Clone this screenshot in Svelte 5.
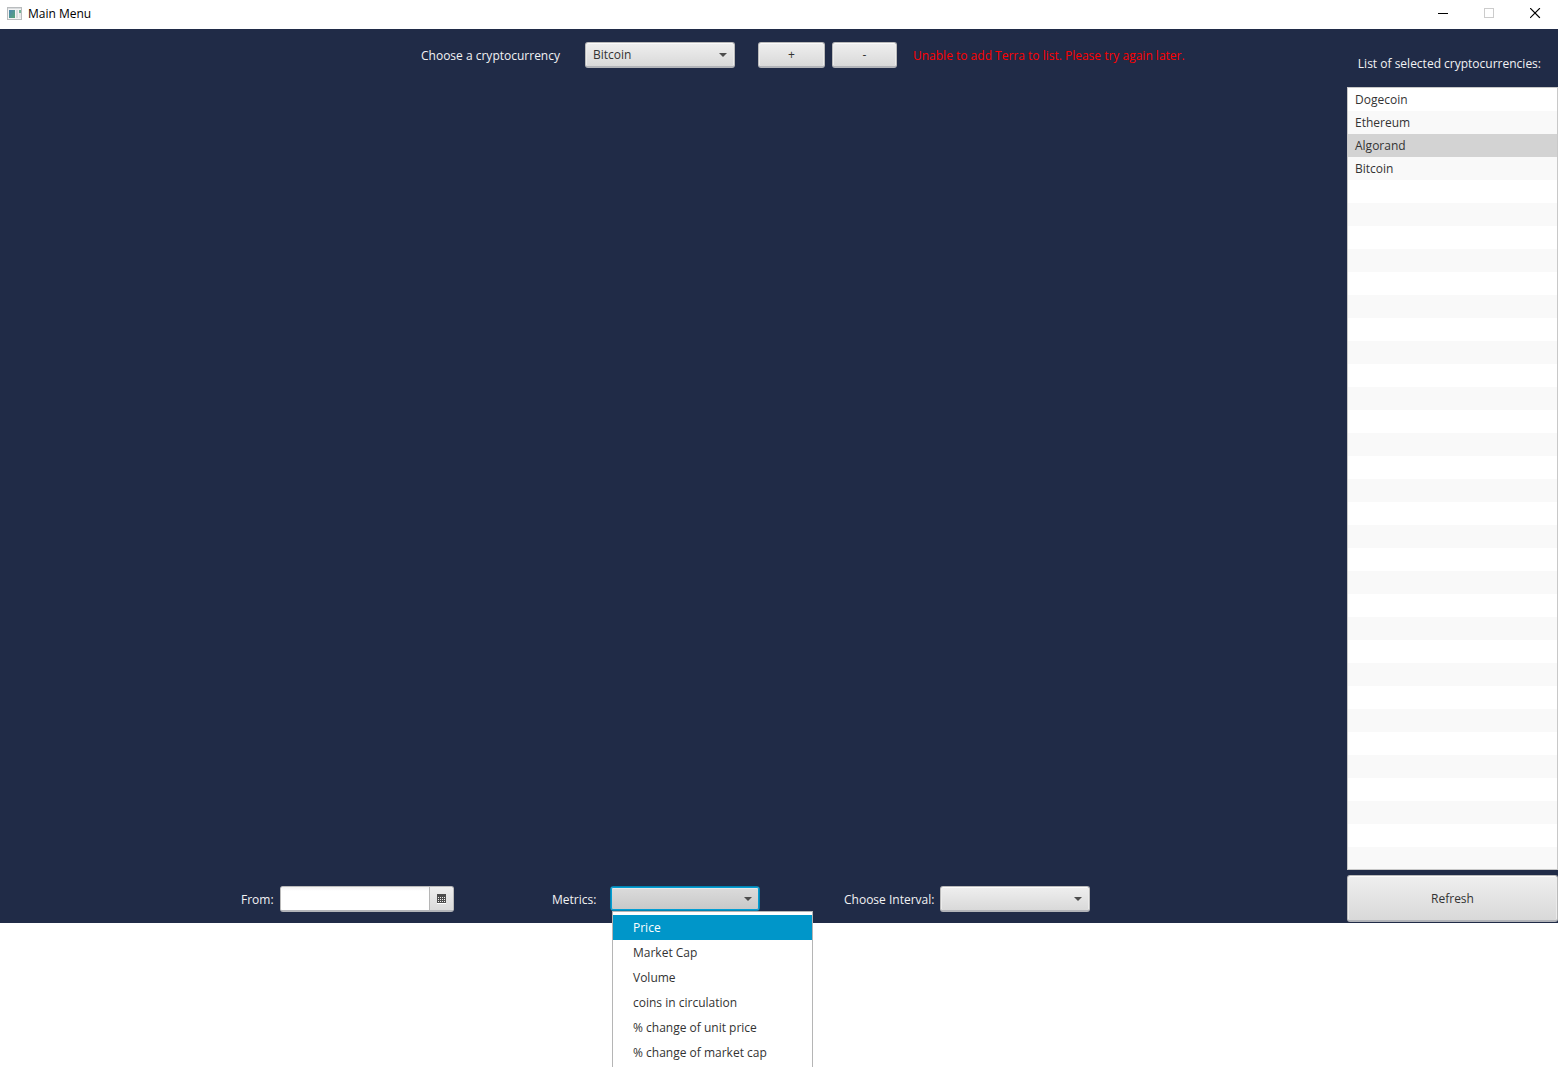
<script>
  const coins = ['Bitcoin', 'Dogecoin', 'Ethereum', 'Algorand', 'Terra'];
  const picked = ['Dogecoin', 'Ethereum', 'Algorand', 'Bitcoin'];
  const rows = Array.from({ length: 34 }, (_, i) => picked[i] ?? '');
  const metrics = [
    'Price',
    'Market Cap',
    'Volume',
    'coins in circulation',
    '% change of unit price',
    '% change of market cap'
  ];
  const intervals = ['Daily', 'Weekly', 'Monthly'];

  let coin = $state('Bitcoin');
  let selected = $state('Algorand');
  let highlighted = $state('Price');
  let metric = $state('');
  let interval = $state('');
  let from = $state('');
</script>

<div class="app">
  <header class="titlebar">
    <svg class="logo" width="16" height="14" viewBox="0 0 16 14" aria-hidden="true">
      <defs>
        <linearGradient id="pane" x1="0" y1="0" x2="1" y2="1">
          <stop offset="0" stop-color="#4a86b0" />
          <stop offset="1" stop-color="#57a578" />
        </linearGradient>
      </defs>
      <rect x="0.5" y="0.5" width="14" height="12" fill="#f4f4f4" stroke="#b9bcbe" />
      <rect x="1" y="1" width="13" height="1" fill="#d9dcde" />
      <rect x="2" y="3" width="6" height="8" fill="url(#pane)" />
      <rect x="9" y="3" width="2" height="8" fill="#d8dcdf" />
      <rect x="12" y="3" width="2" height="3" fill="#74b59a" />
      <rect x="12" y="6" width="2" height="5" fill="#e6e8e9" />
    </svg>
    <h1>Main Menu</h1>
    <div class="window-buttons">
      <button aria-label="Minimize">
        <svg width="12" height="11" viewBox="0 0 12 11"><path d="M1 5.5H11" stroke="#000" /></svg>
      </button>
      <button aria-label="Maximize" disabled>
        <svg width="11" height="11" viewBox="0 0 11 11"><rect x="0.5" y="0.5" width="9" height="9" fill="none" stroke="#ccc" /></svg>
      </button>
      <button aria-label="Close">
        <svg width="11" height="11" viewBox="0 0 11 11"><path d="M0.5 0.5L9.5 9.5M9.5 0.5L0.5 9.5" stroke="#000" stroke-width="1.1" stroke-linecap="square" /></svg>
      </button>
    </div>
  </header>

  <main>
    <section class="workspace">
      <div class="toolbar">
        <label class="coin-label" for="coin">Choose a cryptocurrency</label>
        <div class="combo">
          <select id="coin" bind:value={coin}>
            {#each coins as name}<option>{name}</option>{/each}
          </select>
        </div>
        <div class="actions">
          <button class="btn add">+</button>
          <button class="btn remove">-</button>
        </div>
        <p class="error" role="alert">Unable to add Terra to list. Please try again later.</p>
      </div>

      <div class="filters">
        <label class="from-label" for="from">From:</label>
        <div class="date">
          <input id="from" type="text" bind:value={from} />
          <button aria-label="Open calendar">
            <svg width="9" height="10" viewBox="0 0 9 10">
              <path d="M0 0H9V9H0Z" fill="#4d4d4d" />
              <path d="M1 3.5H8M1 5.5H8M1 7.5H8" stroke="#eee" stroke-dasharray="1 1" />
              <path d="M0 9.5H9" stroke="#fff" />
            </svg>
          </button>
        </div>
        <label class="metric-label" for="metric">Metrics:</label>
        <div class="combo open">
          <select id="metric" bind:value={metric}>
            <option value=""></option>
            {#each metrics as name}<option>{name}</option>{/each}
          </select>
          <ul class="menu">
            {#each metrics as name}
              <li>
                <button
                  class:highlighted={name === highlighted}
                  onmouseenter={() => (highlighted = name)}
                  onclick={() => (metric = name)}>{name}</button>
              </li>
            {/each}
          </ul>
        </div>
        <label class="interval-label" for="interval">Choose Interval:</label>
        <div class="combo">
          <select id="interval" bind:value={interval}>
            <option value=""></option>
            {#each intervals as name}<option>{name}</option>{/each}
          </select>
        </div>
      </div>
    </section>

    <aside>
      <h2>List of selected cryptocurrencies:</h2>
      <ul class="list">
        {#each rows as name}
          <li>
            {#if name}
              <button class:selected={name === selected} onclick={() => (selected = name)}>{name}</button>
            {/if}
          </li>
        {/each}
      </ul>
      <button class="btn refresh">Refresh</button>
    </aside>
  </main>
</div>

<style>
  :global(body) {
    margin: 0;
    background: #fff;
  }
  .app {
    position: relative;
    min-height: 100vh;
    overflow: hidden;
    font: 12px/16px 'Open Sans', 'Noto Sans', sans-serif;
    color: #333;
  }
  .app * {
    box-sizing: border-box;
  }
  button,
  select,
  input {
    font: inherit;
    color: inherit;
    margin: 0;
    padding: 0;
    border: 0;
    background: none;
    outline: none;
  }
  ul {
    list-style: none;
    margin: 0;
    padding: 0;
  }

  .titlebar {
    display: flex;
    align-items: center;
    height: 29px;
    padding: 0 0 2px 7px;
    background: #fff;
    color: #000;
  }
  h1 {
    margin: 0 0 0 5px;
    font-size: 12px;
    font-weight: 400;
  }
  .window-buttons {
    display: flex;
    margin-left: auto;
  }
  .window-buttons button {
    display: grid;
    place-items: center;
    width: 46px;
    height: 27px;
  }

  main {
    display: flex;
    background: #202b47;
    color: #f2f2f4;
  }
  .workspace {
    flex: 1;
    display: flex;
    flex-direction: column;
    justify-content: space-between;
    padding: 13px 0 11px;
  }
  .toolbar,
  .filters {
    display: flex;
    align-items: center;
    white-space: nowrap;
  }
  .toolbar {
    padding-left: 421px;
  }
  .filters {
    padding-left: 241px;
  }
  label,
  .error {
    padding-top: 2px;
  }
  .coin-label {
    width: 164px;
  }
  .from-label {
    width: 39px;
  }
  .metric-label {
    width: 58px;
    margin-left: 98px;
  }
  .interval-label {
    width: 96px;
    margin-left: 84px;
  }
  .actions {
    display: flex;
    gap: 7px;
    margin-left: 23px;
  }
  .error {
    margin: 0 0 0 16px;
    color: #f00;
  }

  .combo {
    position: relative;
    width: 150px;
  }
  .combo::after {
    content: '';
    position: absolute;
    right: 8px;
    top: 11px;
    border: 4px solid transparent;
    border-top-color: #4d4d4d;
    border-bottom: 0;
    pointer-events: none;
  }
  .combo select,
  .btn {
    border: 1px solid #bababa;
    border-bottom: 2px solid #b2b4b9;
    border-radius: 3px;
    background: linear-gradient(#efefef, #d9d9d9);
    box-shadow: inset 0 1px #fbfbfb, inset 1px 0 #ececec, inset -1px 0 #ececec;
    color: #333;
  }
  .combo select {
    display: block;
    appearance: none;
    width: 100%;
    height: 26px;
    padding: 1px 24px 0 7px;
  }
  .combo.open {
    align-self: flex-start;
  }
  .combo.open select {
    height: 25px;
    border: 1px solid #0682b0;
    background: linear-gradient(#dcdcdc, #c8c8c8);
    box-shadow: inset 0 0 0 1px #039ed3, inset 0 2px #e8e8e8;
  }
  .btn {
    height: 26px;
    padding-top: 1px;
    text-align: center;
  }
  .add {
    width: 67px;
  }
  .remove {
    width: 65px;
  }

  .date {
    display: flex;
    width: 174px;
    height: 26px;
    border: 1px solid #bababa;
    border-bottom: 2px solid #b2b4b9;
    border-radius: 3px;
    background: #fff;
    overflow: hidden;
  }
  .date input {
    flex: 1;
    min-width: 0;
    padding: 0 7px;
    background: linear-gradient(#f2f2f2, #fff 4px);
    color: #333;
  }
  .date button {
    display: grid;
    place-items: center;
    width: 24px;
    border-left: 1px solid #b5b5b5;
    background: linear-gradient(#efefef, #dadada);
  }

  .menu {
    position: absolute;
    z-index: 1;
    top: 100%;
    left: 2px;
    width: 201px;
    padding: 3px 0 8px;
    border: 1px solid #b5b5b5;
    background: #fff;
    color: #333;
  }
  .menu button {
    display: block;
    width: 100%;
    height: 25px;
    padding: 1px 20px 0;
    text-align: left;
  }
  .menu .highlighted {
    background: #0096c9;
    color: #fff;
  }

  aside {
    display: flex;
    flex-direction: column;
    width: 211px;
    padding-bottom: 1px;
  }
  h2 {
    margin: 0;
    padding: 27px 17px 15px 0;
    font-size: 12px;
    font-weight: 400;
    text-align: right;
    white-space: nowrap;
  }
  .list {
    border: 1px solid #c8c8c8;
    background: #fff;
    color: #333;
  }
  .list li {
    height: 23px;
  }
  .list li:last-child {
    height: 22px;
  }
  .list li:nth-child(even) {
    background: #f9f9f9;
  }
  .list button {
    display: block;
    width: 100%;
    height: 100%;
    padding: 1px 7px 0;
    text-align: left;
  }
  .list .selected {
    background: #d3d3d3;
  }
  .refresh {
    height: 47px;
    margin-top: 5px;
    padding-top: 2px;
  }
</style>
